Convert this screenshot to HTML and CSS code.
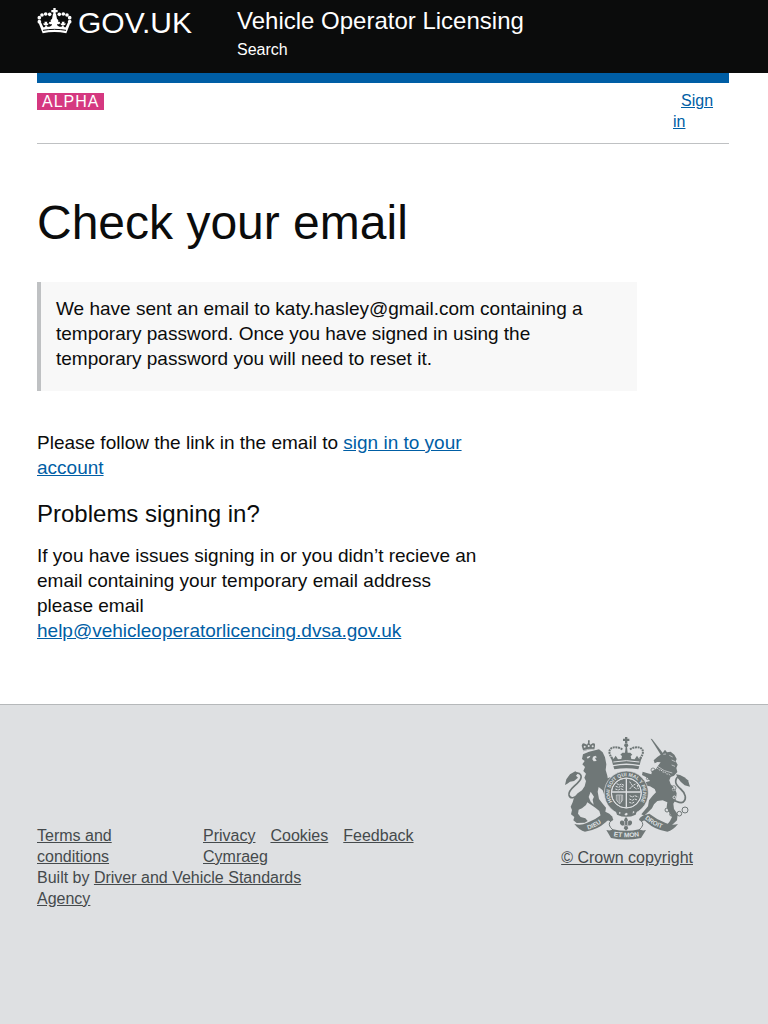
FILE: index.html
```html
<!DOCTYPE html>
<html lang="en">
<head>
<meta charset="utf-8">
<meta name="viewport" content="width=device-width, initial-scale=1">
<title>Check your email - Vehicle Operator Licensing</title>
<link rel="stylesheet" href="styles.css">
</head>
<body>
<header class="header">
  <div class="header-inner">
    <a class="logo" href="#">
      <svg class="logo-crown" viewBox="21 21 105 84" aria-hidden="true">
        <g fill="currentColor">
          <path d="M70 24h7v6h6v7h-6v7h-7v-7h-6v-7h6z"/>
          <circle cx="59" cy="43" r="5.500"/><circle cx="47" cy="42" r="5.500"/><circle cx="36" cy="45" r="5.500"/><circle cx="28" cy="53" r="5.500"/><circle cx="28" cy="65" r="5.500"/>
          <circle cx="88" cy="43" r="5.500"/><circle cx="100" cy="42" r="5.500"/><circle cx="111" cy="45" r="5.500"/><circle cx="119" cy="53" r="5.500"/><circle cx="119" cy="65" r="5.500"/>
          <path d="M26 69l7-2 7 15c4 0 7-3 7-7-4 2-8-1-7-5 4 1 5-1 3-5h9c-2 4-1 6 3 5 1 4-2 7-6 5 0 4 4 6 9 5 5-1 8-4 8-8-4 2-9 0-9-4 0-3 3-4 6-2-2-4-1-8 3-9l3-16h9l3 16c4 1 5 5 3 9 3-2 6-1 6 2 0 4-5 6-9 4 0 4 3 7 8 8 5 1 9-1 9-5-4 2-7-1-6-5 4 1 5-1 3-5h9c-2 4-1 6 3 5 1 4-3 7-7 5 0 4 3 7 7 7l7-15 7 2-12 31c-23-5-48-5-71 0z"/>
        </g>
        <path d="M39 91c23-4 46-4 69 0" fill="none" stroke="#0b0c0c" stroke-width="3"/>
      </svg>
      <span>GOV.UK</span>
    </a>
    <div class="service">
      <a class="service-name" href="#">Vehicle Operator Licensing</a>
      <nav><a class="service-link" href="#">Search</a></nav>
    </div>
  </div>
</header>

<div class="wrap">
  <div class="phase-banner">
    <strong class="phase-tag">ALPHA</strong>
    <div class="account"><a class="account-link" href="#">Sign in</a></div>
  </div>
  <main class="content">
    <h1 class="title">Check your email</h1>
    <div class="panel">
      <p class="text">We have sent an email to katy.hasley@gmail.com containing a temporary password. Once you have signed in using the temporary password you will need to reset it.</p>
    </div>
    <div class="column">
      <p class="text">Please follow the link in the email to <a href="#">sign in to your account</a></p>
      <h2 class="subtitle">Problems signing in?</h2>
      <p class="text">If you have issues signing in or you didn’t recieve an email containing your temporary email address please email <a href="mailto:help@vehicleoperatorlicencing.dvsa.gov.uk">help@vehicleoperatorlicencing.dvsa.gov.uk</a></p>
    </div>
  </main>
</div>

<footer class="footer">
  <div class="wrap footer-inner">
    <div class="footer-meta">
      <div class="footer-links">
        <a class="footer-terms" href="#">Terms and conditions</a>
        <ul class="footer-list">
          <li><a href="#">Privacy</a></li>
          <li><a href="#">Cookies</a></li>
          <li><a href="#">Feedback</a></li>
          <li><a href="#">Cymraeg</a></li>
        </ul>
      </div>
      <p class="built-by">Built by <a href="#">Driver and Vehicle Standards Agency</a></p>
    </div>
    <a class="copyright" href="#">
      <svg class="crest" viewBox="45 33 375 312" aria-hidden="true">
        <defs>
          <path id="garter" d="M197 242A50 50 0 1 1 261 242"/>
          <path id="ribbon-left" d="M114 314Q141 307 166 284"/>
          <path id="ribbon-mid" d="M188 333Q229 341 271 333"/>
          <path id="ribbon-right" d="M284 281Q313 306 348 313"/>
        </defs>
        <!-- lion -->
        <g fill="#6f7777">
          <path d="M100 79L95 62Q97 52 105 56L111 59L116 50L121 59L128 55Q137 53 135 62L133 74Q116 72 100 79Z"/>
          <path d="M114 46h5v7h-5z"/>
          <path d="M99 88L117 80L147 73L158 82L165 97L169 118L167 135L172 152L176 178L178 200L174 217L163 210L158 196L146 186L143 200L147 222L158 236L168 248L166 260L178 266L188 276L184 286L158 282L152 272L148 258L136 248L124 240L112 232L108 240L96 250L86 254L84 266L92 276L106 280L113 288L104 293L80 294L70 286L73 276L63 268L66 255L62 245L68 232L72 218L84 204L96 196L104 184L108 168L103 158L108 146L100 138L105 126L97 118L104 108L96 102Z"/>
          <path d="M45 180L49 163L60 148L76 139L84 144L78 152L84 158L72 168L60 170L52 176Z"/>
          <path d="M160 166L180 157L187 164L178 178L177 194L166 198Z"/>
        </g>
        <path d="M74 146C92 140 99 154 88 168C76 184 54 194 57 210C60 223 75 220 86 206" fill="none" stroke="#6f7777" stroke-width="5"/>
        <g fill="#dee0e2">
          <path d="M129 95l7-3 5 5-6 2 5 9-9 1-4-6z"/>
          <path d="M110 96l11-4-1 4-7 5z"/>
          <circle cx="104" cy="65" r="3"/><circle cx="116" cy="63" r="3"/><circle cx="128" cy="64" r="3"/>
          <path d="M122 200l-6 16 6 14 9 9-3-15 4-9z"/>
        </g>
        <path d="M99 77q16-6 36-4" fill="none" stroke="#dee0e2" stroke-width="2"/>
        <!-- unicorn -->
        <g fill="#6f7777">
          <path d="M302 41L306 42L343 90L336 95Z"/>
          <path d="M345 74L351 82L362 80L373 89L380 102L377 109L383 119L379 129L382 141L372 152L362 156L358 166L362 178L374 190L380 205L378 222L370 236L372 252L383 268L381 286L366 300L358 310L346 306L360 288L366 276L356 260L350 246L352 232L338 226L322 228L312 238L306 250L294 262L282 272L274 268L284 256L294 244L297 226L308 212L318 202L314 192L300 184L288 182L286 172L300 168L292 158L276 150L278 140L290 144L304 148L306 138L318 132L324 122L332 112L322 111L314 115L311 106L322 96L336 86Z"/>
          <path d="M384 160L378 148L390 150L403 157L414 166L420 185L404 181L392 170Z"/>
        </g>
        <g fill="none" stroke="#6f7777">
          <path d="M386 152C371 167 376 179 392 192C408 206 410 222 400 231C391 237 382 229 372 226" stroke-width="5"/>
          <g stroke-width="3"><circle cx="351" cy="255" r="6"/><circle cx="364" cy="268" r="5"/><circle cx="388" cy="266" r="7"/><circle cx="405" cy="255" r="9"/></g>
        </g>
        <g fill="none" stroke="#dee0e2">
          <path d="M323 124q18 16 44 20" stroke-width="2"/>
          <path d="M322 130l6 5 5-1 5 7 6 0 6 6 6 0 6 5" stroke-width="3" stroke-dasharray="4 3"/>
          <path d="M340 88l8-1M368 96l-10-5M376 110l-11-5M375 124l-10-4" stroke-width="2"/>
          <circle cx="371" cy="193" r="4" stroke-width="3"/><circle cx="373" cy="217" r="4" stroke-width="3"/>
        </g>
        <g fill="none" stroke="#6f7777" stroke-width="2.500"><circle cx="371" cy="189" r="7"/><circle cx="309" cy="135" r="6"/><circle cx="293" cy="160" r="4"/></g>
        <!-- crown -->
        <g fill="#6f7777">
          <path d="M225 36h7v5h6v7h-6v7h-7v-7h-6v-7h6z"/><circle cx="228.500" cy="61" r="6"/>
          <path d="M186 108l-4-11 9 4 6-9 7 11 10-1 2-9-5-4 6-6h8l2-18h4l2 18h8l6 6-5 4 2 9 10 1 7-11 6 9 9-4-4 11-3 12q-40-9-80 0z"/>
        </g>
        <path d="M187 101C163 69 193 58 219 74M270 101C294 69 264 58 238 74" fill="none" stroke="#6f7777" stroke-width="6" stroke-dasharray="6 2"/>
        <path d="M190 111q39-8 78 0" fill="none" stroke="#dee0e2" stroke-width="3"/>
        <path d="M190 124q39-8 78 0l-3 9q-36-7-72 0z" fill="#6f7777"/>
        <!-- garter and shield -->
        <circle cx="229" cy="204" r="56" fill="none" stroke="#6f7777" stroke-width="20"/>
        <circle cx="229" cy="204" r="66" fill="none" stroke="#dee0e2" stroke-width="2"/>
        <circle cx="229" cy="204" r="43" fill="#6f7777"/>
        <g fill="none" stroke="#dee0e2">
          <circle cx="229" cy="204" r="45" stroke-width="3"/>
          <path d="M229 161v86M186 201h86" stroke-width="4"/>
          <path d="M200 176l8 4 6-3 8 4M197 184l9 3 7-4 9 4M196 192l9 3 7-4 10 4M239 170l8 12 12-6M239 192l8-9 14 10M262 180l3 12M239 212l8 4 7-4 11 4M238 222l9 4 7-4 8 3M238 232l8 3 7-4" stroke-width="3" stroke-dasharray="7 2"/>
          <path d="M199 210h19v15l-9 12-10-12zM204 211v20M209 211v24M214 211v20" stroke-width="2"/>
        </g>
        <g fill="#dee0e2" class="motto">
          <text font-size="15"><textPath href="#garter" startOffset="50%" text-anchor="middle">HONI SOIT QUI MAL Y PENSE</textPath></text>
        </g>
        <path d="M195 251q34 20 68 0l-6 18q-28 13-56 0z" fill="#6f7777"/>
        <path d="M208 260l5 4-6 3zM229 263l5 4-6 5-5-4zM249 258l5 3-6 5z" fill="#dee0e2"/>
        <!-- motto ribbon -->
        <g fill="#6f7777">
          <path d="M73 297q21 5 37-3 26-10 49-28l14 4q16 6 17 15l-9 5q-8-8-13 1-26 24-63 29-17-4-32-23z"/>
          <path d="M384 297q-21 5-37-3-26-10-49-28l-14 4q-16 6-17 15l9 5q8-8 13 1 26 24 63 29 17-4 32-23z"/>
          <path d="M169 315q13 3 20-2 39 9 79 0 8 5 20 2l-15 24q-45 9-90 0z"/>
          <path d="M228 276q9 9 4 15 9-8 14-1 2 9-9 12l-5 2 3 6-7 7-7-7 3-6-5-2q-11-3-9-12 5-7 14 1-5-6 4-15z"/>
        </g>
        <path d="M184 287q-15 11 5 28M272 287q15 11-5 28" fill="none" stroke="#6f7777" stroke-width="3"/>
        <path d="M224 288v12M233 288v12M219 302h19" fill="none" stroke="#dee0e2" stroke-width="2"/>
        <g fill="#dee0e2" class="motto">
          <text font-size="19"><textPath href="#ribbon-left">DIEU</textPath></text>
          <text font-size="20"><textPath href="#ribbon-mid" startOffset="50%" text-anchor="middle">ET MON</textPath></text>
          <text font-size="19"><textPath href="#ribbon-right">DROIT</textPath></text>
        </g>
      </svg>
      <span class="copyright-text">© Crown copyright</span>
    </a>
  </div>
</footer>
</body>
</html>
```
FILE: styles.css
```css
* { box-sizing: border-box; }

body {
  margin: 0;
  min-height: 100vh;
  display: flex;
  flex-direction: column;
  background: #fff;
  color: #0b0c0c;
  font-family: "Liberation Sans", Arial, sans-serif;
  font-size: 16px;
  line-height: 21px;
}

h1, h2, p, ul { margin: 0; padding: 0; }
ul { list-style: none; }
a { color: #005ea5; }

.header { background: #0b0c0c; }
.header-inner {
  display: flex;
  padding: 6px 39px 13px 37px;
}
.header a { color: #fff; text-decoration: none; }

.logo {
  width: 200px;
  display: flex;
  align-items: flex-start;
  gap: 6px;
  font-size: 30px;
  line-height: 34px;
}
.logo-crown { width: 35px; height: 28px; margin-top: 1px; }

.service { flex: 1; }
.service-name { display: block; font-size: 24px; line-height: 30px; }
.service nav { padding-top: 3px; }

.wrap { margin: 0 39px 0 37px; }

.phase-banner {
  display: flex;
  justify-content: space-between;
  align-items: flex-start;
  border-top: 10px solid #005ea5;
  border-bottom: 1px solid #bfc1c3;
  padding: 7px 0 11px;
}
.phase-tag {
  margin-top: 3px;
  padding: 0 5px;
  background: #d53880;
  color: #fff;
  font-weight: 400;
  letter-spacing: 1px;
  line-height: 17px;
}
.account { width: 56px; }
.account-link { padding-left: 8px; }

.content { padding: 54px 0 61px; }
.title { font-size: 48px; line-height: 50px; font-weight: 400; }
.text { font-size: 19px; line-height: 25px; }

.panel {
  max-width: 600px;
  margin: 34px 0 39px;
  padding: 14px 45px 20px 15px;
  border-left: 4px solid #bfc1c3;
  background: #f8f8f8;
}
.column { max-width: 450px; }
.subtitle {
  margin: 19px 0 14px;
  font-size: 24px;
  line-height: 30px;
  font-weight: 400;
}

.footer {
  flex: 1;
  border-top: 1px solid #b5b8ba;
  background: #dee0e2;
  color: #454a4c;
}
.footer a { color: #454a4c; }
.footer-inner {
  display: flex;
  justify-content: space-between;
  align-items: flex-end;
  padding: 31px 36px 60px 0;
}
.footer-meta { flex: 0 1 440px; margin-top: 89px; }
.footer-links { display: grid; grid-template-columns: 128px 1fr; gap: 38px; }
.footer-list { display: flex; flex-wrap: wrap; column-gap: 15px; align-content: flex-start; }
.built-by { max-width: 300px; }

.footer .copyright {
  align-self: flex-start;
  display: flex;
  flex-direction: column;
  align-items: center;
  gap: 7px;
}
.crest { width: 125px; height: 104px; }
.motto { font-family: "Liberation Sans", Arial, sans-serif; font-weight: 700; }
```
